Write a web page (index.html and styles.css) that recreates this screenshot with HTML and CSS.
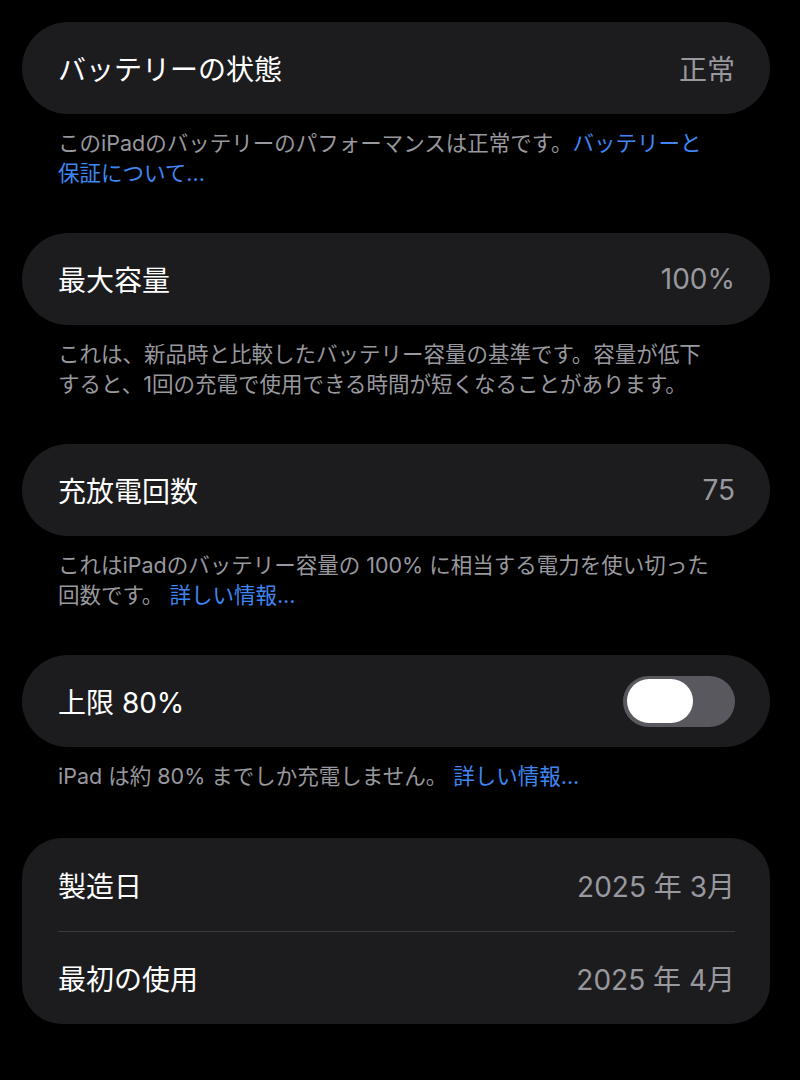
FILE: index.html
```html
<!DOCTYPE html>
<html lang="ja">

<head>
    <meta charset="UTF-8">
    <meta name="viewport" content="width=device-width, initial-scale=1.0">
    <title>バッテリーの状態と充電</title>
    <link rel="stylesheet" href="styles.css">
</head>

<body>
    <main class="settings">
        <section class="group">
            <div class="row">
                <span class="label">バッテリーの状態</span>
                <span class="value">正常</span>
            </div>
        </section>
        <p class="footnote">このiPadのバッテリーのパフォーマンスは正常です。<a href="#">バッテリーと<br>保証について...</a></p>

        <section class="group">
            <div class="row">
                <span class="label">最大容量</span>
                <span class="value">100%</span>
            </div>
        </section>
        <p class="footnote">これは、新品時と比較したバッテリー容量の基準です。容量が低下<br>すると、1回の充電で使用できる時間が短くなることがあります。</p>

        <section class="group">
            <div class="row">
                <span class="label">充放電回数</span>
                <span class="value">75</span>
            </div>
        </section>
        <p class="footnote">これはiPadのバッテリー容量の 100% に相当する電力を使い切った<br>回数です。 <a href="#">詳しい情報...</a></p>

        <section class="group">
            <div class="row">
                <span class="label">上限 80%</span>
                <span class="toggle"><span class="knob"></span></span>
            </div>
        </section>
        <p class="footnote single">iPad は約 80% までしか充電しません。 <a href="#">詳しい情報...</a></p>

        <section class="group list">
            <div class="row">
                <span class="label">製造日</span>
                <span class="value">2025 年 3月</span>
            </div>
            <div class="row">
                <span class="label">最初の使用</span>
                <span class="value">2025 年 4月</span>
            </div>
        </section>
    </main>
</body>

</html>
```

FILE: styles.css
```css
body {
    margin: 0;
    background: #000;
    color: #fff;
    font-family: Inter, "Noto Sans CJK JP", sans-serif;
}

.settings {
    padding: 22px 30px 0 22px;
}

.group {
    background-color: #1c1c1e;
    border-radius: 46px;
}

.group.list {
    border-radius: 40px;
}

.row {
    display: flex;
    align-items: center;
    justify-content: space-between;
    height: 92px;
    padding: 0 35px 0 36px;
    font-size: 28px;
}

.list .row {
    height: 93px;
}

.list .row + .row {
    position: relative;
}

.list .row + .row::before {
    content: "";
    position: absolute;
    top: 0;
    left: 36px;
    right: 35px;
    height: 1px;
    background: #3a3a3c;
}

.label {
    color: #fff;
}

.value {
    color: #98989e;
}

.footnote {
    margin: 14px 0 45px;
    padding: 0 36px;
    font-size: 21.5px;
    line-height: 30px;
    color: #98989e;
    white-space: nowrap;
}

.footnote.single {
    margin-bottom: 47px;
}

.footnote a {
    color: #3f86f2;
    text-decoration: none;
}

.toggle {
    display: flex;
    align-items: center;
    width: 112px;
    height: 51px;
    border-radius: 26px;
    background: #59585e;
    padding: 0 4px;
    box-sizing: border-box;
}

.knob {
    width: 66px;
    height: 44px;
    border-radius: 22px;
    background: #fff;
}
```
